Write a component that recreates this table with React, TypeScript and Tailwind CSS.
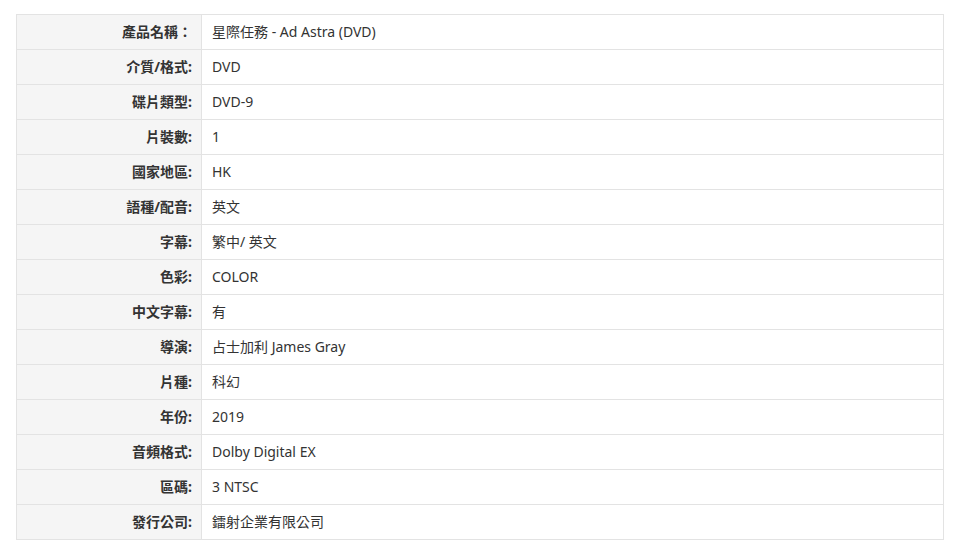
const rows: [string, string][] = [
  ['產品名稱：', '星際任務 - Ad Astra (DVD)'],
  ['介質/格式:', 'DVD'],
  ['碟片類型:', 'DVD-9'],
  ['片裝數:', '1'],
  ['國家地區:', 'HK'],
  ['語種/配音:', '英文'],
  ['字幕:', '繁中/ 英文'],
  ['色彩:', 'COLOR'],
  ['中文字幕:', '有'],
  ['導演:', '占士加利 James Gray'],
  ['片種:', '科幻'],
  ['年份:', '2019'],
  ['音頻格式:', 'Dolby Digital EX'],
  ['區碼:', '3 NTSC'],
  ['發行公司:', '鐳射企業有限公司'],
]

export default function App() {
  return (
    <div
      className="bg-white w-[961px] h-[557px] pt-[14px] pl-[16px]"
      style={{ fontFamily: '"Noto Sans", "Noto Sans CJK TC", sans-serif' }}
    >
      <table className="w-[928px] border-collapse border border-[#e3e3e3] text-[14px] text-[#333]">
        <tbody>
          {rows.map(([label, value]) => (
            <tr key={label} className="h-[35px]">
              <th className="w-[185px] bg-[#f5f5f5] border border-[#e3e3e3] text-right font-bold pr-[9px] pb-[1px] leading-none">
                {label}
              </th>
              <td className="border border-[#e3e3e3] pl-[10px] pb-[1px] leading-none">{value}</td>
            </tr>
          ))}
        </tbody>
      </table>
    </div>
  )
}
